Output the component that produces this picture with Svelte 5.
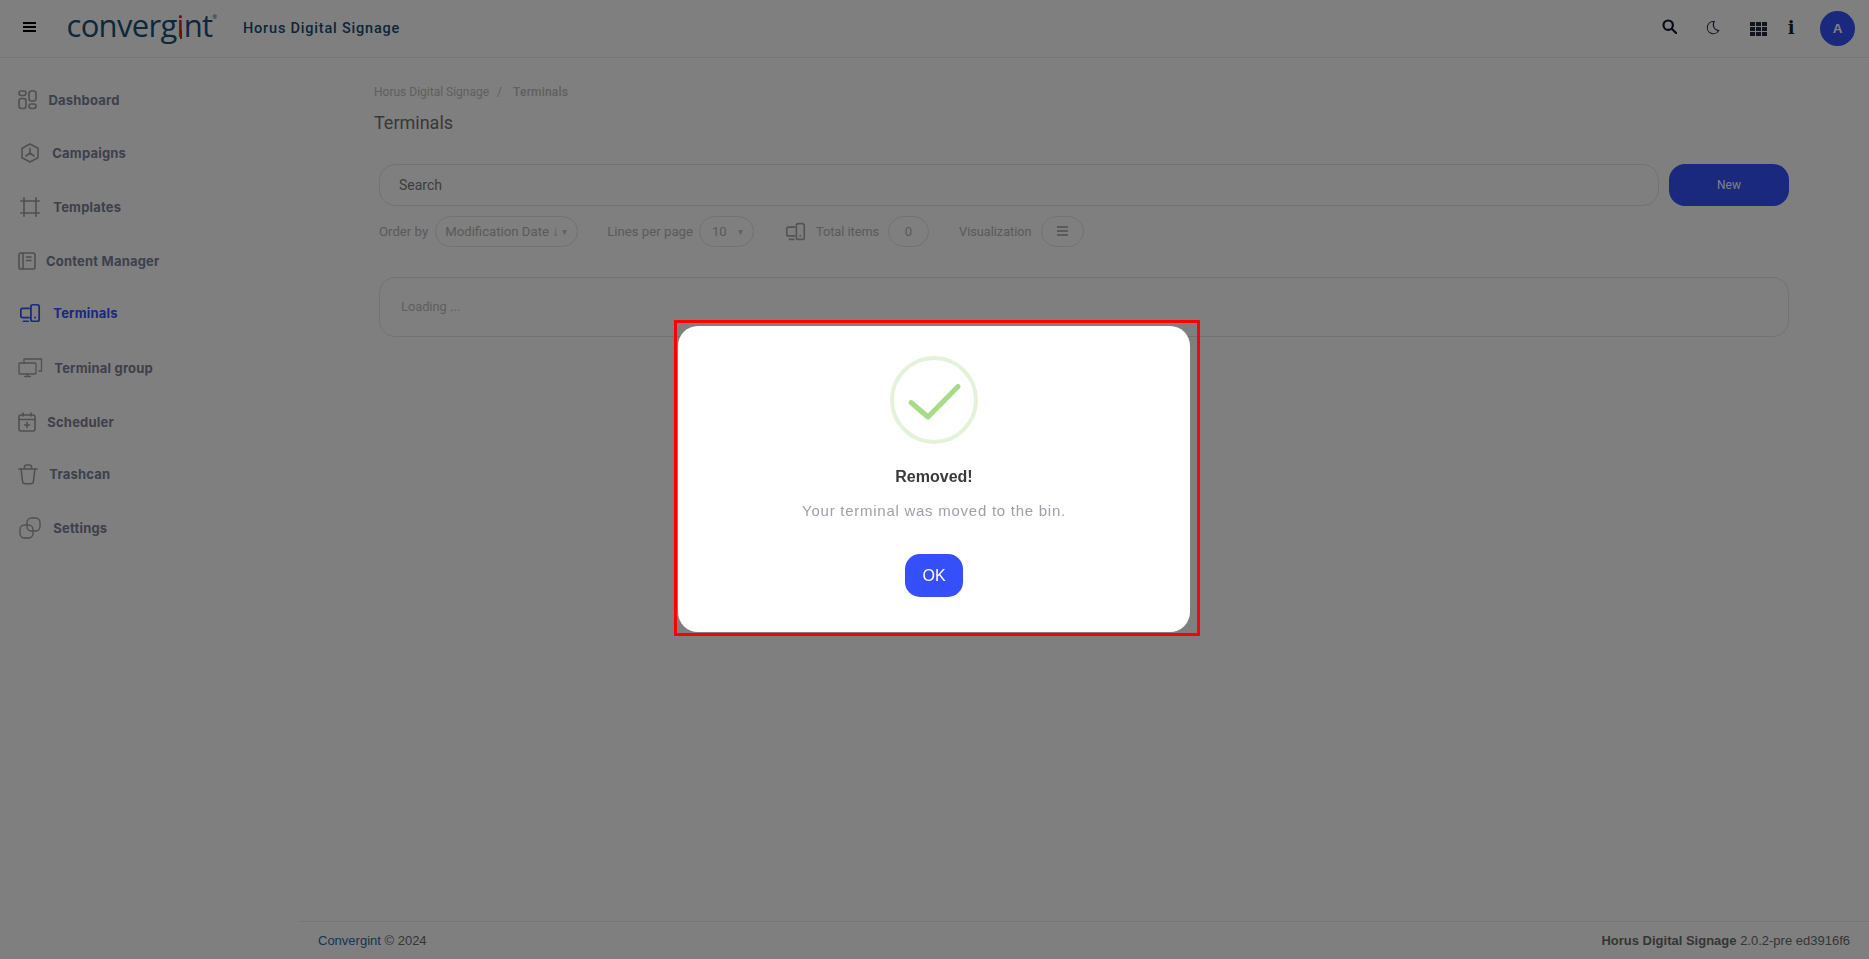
<script>
	const menu = [
		{ label: 'Dashboard', icon: 'dash', gap: 10.5, pad: 18, h: 53 },
		{ label: 'Campaigns', icon: 'camp', gap: 12.3, pad: 20, h: 54 },
		{ label: 'Templates', icon: 'tmpl', gap: 13.3, pad: 20, h: 54 },
		{ label: 'Content Manager', icon: 'book', gap: 10, pad: 18, h: 54 },
		{ label: 'Terminals', icon: 'term', gap: 12.3, pad: 19, h: 50, active: true },
		{ label: 'Terminal group', icon: 'group', gap: 11.3, pad: 18, h: 59 },
		{ label: 'Scheduler', icon: 'cal', gap: 11.3, pad: 18, h: 50 },
		{ label: 'Trashcan', icon: 'trash', gap: 11.3, pad: 18, h: 54 },
		{ label: 'Settings', icon: 'gear', gap: 12.3, pad: 19, h: 54 }
	]
</script>

{#snippet termIcon(size)}
	<svg width={size} height={size} viewBox="0 0 24 24" fill="none" stroke="currentColor" stroke-width="1.9" stroke-linecap="round" stroke-linejoin="round">
		<path d="M11 7H4a2 2 0 0 0-2 2v6a2 2 0 0 0 2 2h7" />
		<path d="M5 21h5" />
		<rect x="13" y="3" width="9" height="18" rx="2" />
		<path d="M17.5 17v.01" stroke-width="2.2" />
	</svg>
{/snippet}

<div class="page">
	<header class="topbar">
		<button class="burger" aria-label="menu"><span></span><span></span><span></span></button>
		<div class="logo">conver<span class="gi">g<span class="i">i</span></span>nt<sup>®</sup></div>
		<div class="product">Horus Digital Signage</div>
		<div class="tools">
			<svg class="t-search" width="15" height="15" viewBox="0 0 16 16" fill="none" stroke="#0a1230" stroke-width="2.3">
				<circle cx="6.6" cy="6.6" r="5" />
				<path d="M10.4 10.4 15 15" stroke-linecap="round" />
			</svg>
			<svg class="t-moon" width="14" height="15" viewBox="0 0 16 16" fill="none" stroke="#1f2a44" stroke-width="1.2">
				<path d="M9.5 1.2A7 7 0 1 0 14.6 11.5 6.6 6.6 0 0 1 9.5 1.2Z" />
			</svg>
			<div class="t-grid">
				{#each Array(9) as _}<i></i>{/each}
			</div>
			<div class="t-info">i</div>
			<div class="avatar">A</div>
		</div>
	</header>

	<div class="body">
		<nav class="side">
			{#each menu as m}
				<div class="item" class:active={m.active} style="height:{m.h}px;padding-left:{m.pad}px;gap:{m.gap}px">
					{#if m.icon === 'dash'}
						<svg width="20" height="20" viewBox="0 0 20 20" fill="none" stroke="currentColor" stroke-width="1.6">
							<rect x="1" y="1" width="7" height="4.5" rx="2.2" />
							<rect x="1" y="8.5" width="7" height="10" rx="2.5" />
							<rect x="11" y="1" width="7" height="10" rx="2.5" />
							<rect x="11" y="14" width="7" height="4.5" rx="2.2" />
						</svg>
					{:else if m.icon === 'camp'}
						<svg width="20" height="20" viewBox="0 0 20 20" fill="none" stroke="currentColor" stroke-width="1.6" stroke-linejoin="round">
							<path d="M10 1 18 5.3v9.4L10 19l-8-4.3V5.3Z" />
							<path d="M10 5.5V10M10 10l-4 3M10 10l4 3" stroke-linecap="round" />
						</svg>
					{:else if m.icon === 'tmpl'}
						<svg width="20" height="20" viewBox="0 0 20 20" fill="none" stroke="currentColor" stroke-width="1.6" stroke-linecap="round">
							<path d="M4 .8v18.4M16 .8v18.4M.8 4h18.4M.8 16h18.4" />
						</svg>
					{:else if m.icon === 'book'}
						<svg width="18" height="18" viewBox="0 0 18 18" fill="none" stroke="currentColor" stroke-width="1.6" stroke-linecap="round">
							<rect x="1" y="1" width="16" height="16" rx="1.8" />
							<path d="M5 1v16M8.5 5H13M8.5 8.5H13" />
						</svg>
					{:else if m.icon === 'term'}
						{@render termIcon(22)}
					{:else if m.icon === 'group'}
						<svg width="25" height="20" viewBox="0 0 25 20" fill="none" stroke="currentColor" stroke-width="1.3" stroke-linecap="round">
							<rect x="1" y="5" width="17" height="11" rx="1" />
							<path d="M6 1h17.5v9M6 1v4M21 13h2.5v-3M6.5 18.5h6M9.5 16v2.5" />
						</svg>
					{:else if m.icon === 'cal'}
						<svg width="18" height="20" viewBox="0 0 18 20" fill="none" stroke="currentColor" stroke-width="1.6" stroke-linecap="round">
							<rect x="1" y="3" width="16" height="16" rx="2" />
							<path d="M1 7.5h16M5 1v3M13 1v3M9 10.5v5M6.5 13h5" />
						</svg>
					{:else if m.icon === 'trash'}
						<svg width="20" height="21" viewBox="0 0 20 21" fill="none" stroke="currentColor" stroke-width="1.6" stroke-linecap="round" stroke-linejoin="round">
							<path d="M1 5h18M3 5l1.6 12.5A2.5 2.5 0 0 0 7 19.7h6a2.5 2.5 0 0 0 2.4-2.2L17 5M6.5 5V3a2 2 0 0 1 2-2h3a2 2 0 0 1 2 2v2" />
						</svg>
					{:else}
						<svg width="22" height="22" viewBox="0 0 22 22" fill="none" stroke="currentColor" stroke-width="1.4">
							<rect x="1" y="8" width="13" height="13" rx="4.5" />
							<rect x="8" y="1" width="13" height="13" rx="4.5" />
						</svg>
					{/if}
					<span>{m.label}</span>
				</div>
			{/each}
		</nav>

		<main class="content">
			<div class="crumbs"><span>Horus Digital Signage</span><span class="sep">/</span><b>Terminals</b></div>
			<h1>Terminals</h1>

			<div class="search-row">
				<div class="search">Search</div>
				<button class="new">New</button>
			</div>

			<div class="filters">
				<span>Order by</span>
				<div class="pill order">Modification Date ↓<em>▾</em></div>
				<span class="lines">Lines per page</span>
				<div class="pill ten">10<em>▾</em></div>
				<span class="ticon">{@render termIcon(21)}</span>
				<span class="narrow">Total items</span>
				<div class="pill zero">0</div>
				<span class="vis narrow">Visualization</span>
				<div class="pill view"><i></i><i></i><i></i></div>
			</div>

			<div class="loading">Loading ...</div>
		</main>
	</div>

	<footer class="foot">
		<div><span class="brand">Convergint</span> © 2024</div>
		<div><b>Horus Digital Signage</b> 2.0.2-pre ed3916f6</div>
	</footer>
</div>

<div class="overlay">
	<div class="modal">
		<svg class="check" width="88" height="88" viewBox="0 0 88 88" fill="none">
			<circle cx="44" cy="44" r="42" stroke="#e4f2d9" stroke-width="4" />
			<path d="M21 46.5 38 61 68 30.5" stroke="#a5dc86" stroke-width="5" stroke-linecap="round" stroke-linejoin="round" />
		</svg>
		<h2>Removed!</h2>
		<p>Your terminal was moved to the bin.</p>
		<button class="ok">OK</button>
	</div>
	<div class="mark"></div>
</div>

<style>
	:global(body) {
		margin: 0;
		background: #fff;
		font-family: Inter, "Liberation Sans", sans-serif;
		overflow: hidden;
	}
	.page {
		height: 959px;
		display: flex;
		flex-direction: column;
		color: #2b2b2b;
	}
	.topbar {
		height: 58px;
		flex: none;
		box-sizing: border-box;
		border-bottom: 1px solid #ececec;
		display: flex;
		align-items: center;
		padding-left: 22.5px;
	}
	.burger {
		width: 13px;
		padding: 0;
		border: 0;
		background: none;
		display: flex;
		flex-direction: column;
		gap: 2px;
		margin: -3px 31px 0 0;
	}
	.burger span {
		height: 2px;
		background: #000;
	}
	.logo {
		font-family: "Open Sans", sans-serif;
		font-weight: 400;
		font-size: 31px;
		letter-spacing: -0.7px;
		color: #18507a;
		line-height: 1;
		width: 176.5px;
		white-space: nowrap;
		margin-top: -7px;
	}
	.logo .gi {
		position: relative;
	}
	.logo .i {
		color: #d81f26;
		position: relative;
	}
	.logo .i::after {
		content: "";
		position: absolute;
		left: 3.5px;
		top: 26px;
		width: 2px;
		height: 9px;
		background: #d81f26;
	}
	.logo sup {
		font-size: 6px;
		vertical-align: 18px;
		line-height: 0;
	}
	.product {
		font-family: Roboto, sans-serif;
		font-weight: 500;
		font-size: 14.5px;
		letter-spacing: 0.8px;
		color: #184c73;
	}
	.tools {
		margin-left: auto;
		display: flex;
		align-items: center;
		padding-right: 14px;
	}
	.t-search { margin: -4px 29px 0 0; }
	.t-moon { margin: -2px 30px 0 0; }
	.t-grid {
		display: grid;
		grid-template-columns: repeat(3, 5px);
		grid-auto-rows: 4px;
		gap: 1px;
		margin-right: 21px;
	}
	.t-grid i {
		background: #232a3a;
	}
	.t-info {
		font-family: "DejaVu Serif", serif;
		font-weight: 700;
		font-size: 18px;
		line-height: 1;
		color: #1a1f2e;
		margin: -2px 25.5px 0 0;
	}
	.avatar {
		width: 35px;
		height: 35px;
		border-radius: 50%;
		background: #3550fa;
		color: #fff;
		font-family: "Liberation Sans", sans-serif;
		font-weight: 700;
		font-size: 13.5px;
		display: flex;
		align-items: center;
		justify-content: center;
	}
	.body {
		flex: 1;
		display: flex;
		min-height: 0;
	}
	.side {
		width: 298px;
		flex: none;
		padding-top: 15px;
		box-sizing: border-box;
	}
	.item {
		display: flex;
		align-items: center;
		box-sizing: border-box;
		color: #a0a0a0;
	}
	.item span {
		color: #7c8099;
		font-weight: 700;
		font-size: 13px;
		letter-spacing: 0.2px;
	}
	.item.active,
	.item.active span {
		color: #3550fa;
	}
	.content {
		flex: 1;
		padding: 26px 80px 0 76px;
		box-sizing: border-box;
		min-width: 0;
	}
	.crumbs {
		font-family: Roboto, sans-serif;
		font-size: 12px;
		color: #c0c0c0;
		line-height: 16px;
		display: flex;
		gap: 8px;
	}
	.crumbs b {
		font-weight: 500;
		margin-left: 3px;
		letter-spacing: 0.2px;
	}
	h1 {
		margin: 11px 0 0;
		font-family: Roboto, sans-serif;
		font-weight: 400;
		font-size: 18px;
		line-height: 24px;
		color: #707070;
	}
	.search-row {
		display: flex;
		margin: 28.5px 0 0 5px;
		gap: 10px;
	}
	.search {
		flex: 1;
		height: 42px;
		box-sizing: border-box;
		border: 1px solid #e4e4e4;
		border-radius: 16px;
		padding-left: 19px;
		display: flex;
		align-items: center;
		font-family: Roboto, sans-serif;
		font-size: 14px;
		color: #7a7a7a;
	}
	.new {
		width: 120px;
		height: 42px;
		border: 0;
		border-radius: 16px;
		background: #3550fa;
		color: #fff;
		font-family: Roboto, sans-serif;
		font-size: 12px;
	}
	.filters {
		display: flex;
		align-items: center;
		margin: 10px 0 0 5px;
		font-family: Roboto, sans-serif;
		font-size: 13.2px;
		color: #b4b4b4;
	}
	.narrow {
		font-size: 12.7px;
	}
	.pill {
		height: 31px;
		box-sizing: border-box;
		border: 1px solid #e4e4e4;
		border-radius: 16px;
		display: flex;
		align-items: center;
	}
	.pill em {
		font-style: normal;
		font-size: 10px;
		color: #c4c4c4;
	}
	.order {
		width: 143px;
		margin-left: 7px;
		padding-left: 9px;
		gap: 3px;
	}
	.lines { margin-left: 29px; }
	.ten {
		width: 55px;
		margin-left: 6px;
		padding-left: 12px;
		gap: 11px;
	}
	.ticon {
		margin: 0 10px 0 31px;
		height: 21px;
		color: #a8a8a8;
	}
	.zero {
		width: 41px;
		margin-left: 9px;
		justify-content: center;
	}
	.vis { margin-left: 30px; }
	.view {
		width: 43px;
		margin-left: 9px;
		flex-direction: column;
		justify-content: center;
		gap: 2px;
	}
	.view i {
		width: 11px;
		height: 2px;
		background: #b4b4b4;
	}
	.loading {
		margin: 30px 0 0 5px;
		height: 60px;
		box-sizing: border-box;
		border: 1px solid #e4e4e4;
		border-radius: 16px;
		padding-left: 21px;
		display: flex;
		align-items: center;
		font-family: Roboto, sans-serif;
		font-size: 12.8px;
		color: #bcbcbc;
	}
	.foot {
		flex: none;
		margin-left: 298px;
		height: 38px;
		box-sizing: border-box;
		border-top: 1px solid #ececec;
		display: flex;
		justify-content: space-between;
		align-items: center;
		padding: 0 19px 0 20px;
		font-family: "Liberation Sans", sans-serif;
		font-size: 13px;
		color: #6b6b6b;
	}
	.brand {
		color: #2d6a9f;
	}
	.overlay {
		position: fixed;
		inset: 0;
		background: rgba(0, 0, 0, 0.5);
		display: flex;
		align-items: center;
		justify-content: center;
	}
	.modal {
		width: 512px;
		height: 306px;
		box-sizing: border-box;
		background: #fff;
		border-radius: 20px;
		display: flex;
		flex-direction: column;
		align-items: center;
		padding-top: 30px;
		margin: -1px 1px 0 0;
		font-family: "Liberation Sans", sans-serif;
	}
	h2 {
		margin: 23px 0 0;
		font-size: 16px;
		line-height: 20px;
		font-weight: 700;
		color: #3a3a3a;
	}
	p {
		margin: 14px 0 0;
		font-size: 15px;
		line-height: 20px;
		letter-spacing: 0.74px;
		color: #9f9fa8;
	}
	.ok {
		margin-top: 33px;
		width: 58px;
		height: 43px;
		border: 0;
		border-radius: 15px;
		background: #3550fa;
		color: #fff;
		font-family: "Liberation Sans", sans-serif;
		font-size: 16px;
	}
	.mark {
		position: absolute;
		left: 674px;
		top: 320px;
		width: 526px;
		height: 316px;
		box-sizing: border-box;
		border: 3px solid #f00;
	}
</style>
